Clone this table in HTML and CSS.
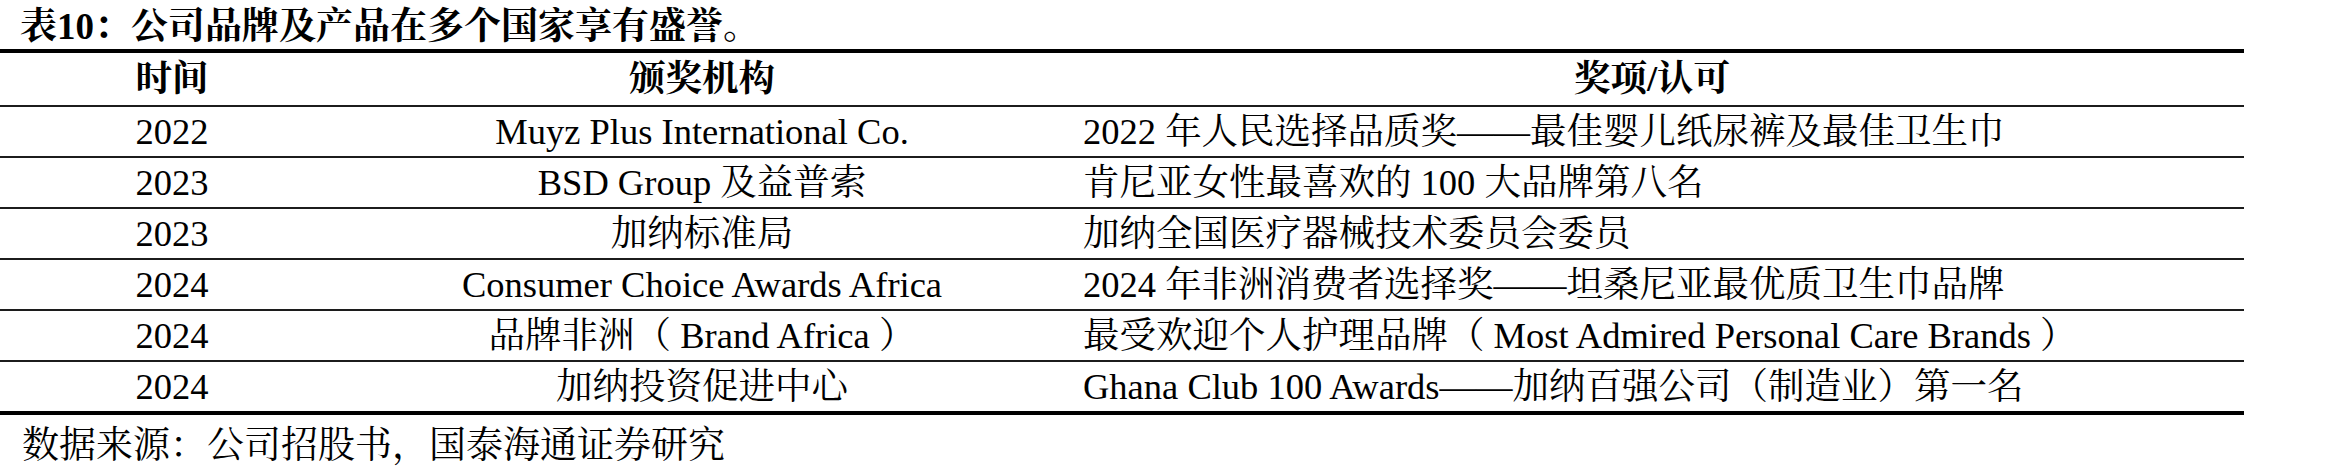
FILE: index.html
```html
<!DOCTYPE html>
<html lang="zh-CN">
<head>
<meta charset="utf-8">
<link rel="stylesheet" href="styles.css">
</head>
<body>
<div class="page">
  <div class="title">表10：公司品牌及产品在多个国家享有盛誉。</div>
  <table class="awards">
    <colgroup>
      <col class="c-year">
      <col class="c-org">
      <col class="c-award">
    </colgroup>
    <thead>
      <tr>
        <th>时间</th>
        <th>颁奖机构</th>
        <th>奖项/认可</th>
      </tr>
    </thead>
    <tbody>
      <tr><td>2022</td><td>Muyz Plus International Co.</td><td class="left">2022 年人民选择品质奖——最佳婴儿纸尿裤及最佳卫生巾</td></tr>
      <tr><td>2023</td><td>BSD Group 及益普索</td><td class="left">肯尼亚女性最喜欢的 100 大品牌第八名</td></tr>
      <tr><td>2023</td><td>加纳标准局</td><td class="left">加纳全国医疗器械技术委员会委员</td></tr>
      <tr><td>2024</td><td>Consumer Choice Awards Africa</td><td class="left">2024 年非洲消费者选择奖——坦桑尼亚最优质卫生巾品牌</td></tr>
      <tr><td>2024</td><td>品牌非洲（ Brand Africa ）</td><td class="left">最受欢迎个人护理品牌（ Most Admired Personal Care Brands ）</td></tr>
      <tr><td>2024</td><td>加纳投资促进中心</td><td class="left">Ghana Club 100 Awards——加纳百强公司（制造业）第一名</td></tr>
    </tbody>
  </table>
  <div class="source">数据来源：公司招股书，国泰海通证券研究</div>
</div>
</body>
</html>
```

FILE: styles.css
```css
html, body {
  margin: 0;
  padding: 0;
  background: #ffffff;
}

body {
  font-family: "Liberation Serif", "AR PL UKai CN", "Noto Serif CJK SC", "Noto Sans CJK SC", serif;
  color: #000000;
}

.page {
  width: 2340px;
  height: 472px;
  overflow: hidden;
}

.title {
  font-size: 37px;
  font-weight: bold;
  padding: 4px 0 0 20px;
  line-height: 45px;
  height: 45px;
  white-space: nowrap;
}

.awards {
  width: 2244px;
  border-collapse: collapse;
  table-layout: fixed;
  font-size: 36.5px;
  border-top: 4px solid #000000;
  border-bottom: 4px solid #000000;
}

.c-year { width: 344px; }
.c-org { width: 716px; }
.c-award { width: 1184px; }

.awards th,
.awards td {
  padding: 0;
  text-align: center;
  white-space: nowrap;
  line-height: 40px;
  border-bottom: 2px solid #1c1c1c;
}

.awards th {
  height: 52px;
  font-weight: bold;
}

.awards td {
  height: 49px;
  font-weight: normal;
}

.awards tbody tr:last-child td {
  border-bottom: none;
}

.awards td.left {
  text-align: left;
  padding-left: 23px;
}

.source {
  font-size: 37px;
  line-height: 42px;
  margin-top: 10px;
  padding-left: 22px;
  white-space: nowrap;
}
```
